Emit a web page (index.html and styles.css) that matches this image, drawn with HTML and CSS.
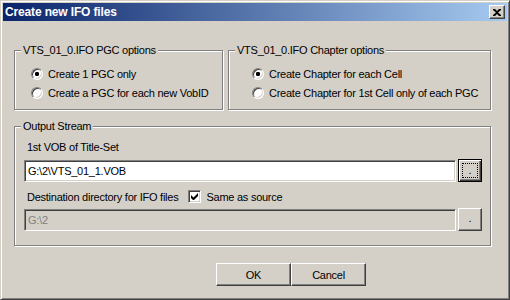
FILE: index.html
```html
<!DOCTYPE html>
<html lang="en">
<head>
  <meta charset="UTF-8">
  <title>Create new IFO files</title>
  <link rel="stylesheet" href="styles.css">
</head>
<body>
  <div class="window">
    <div class="titlebar">
      <span class="title">Create new IFO files</span>
      <button class="close">
        <svg width="8" height="7" viewBox="0 0 8 7"><path d="M0 0h2l2 2 2-2h2v1L5 3.5 8 6v1H6L4 5 2 7H0V6l3-2.5L0 1z" fill="#000"/></svg>
      </button>
    </div>

    <div class="content">
      <div class="row">
        <fieldset class="group pgc">
          <legend>VTS_01_0.IFO PGC options</legend>
          <div class="group-body">
            <label class="opt"><span class="radio checked"></span>Create 1 PGC only</label>
            <label class="opt"><span class="radio"></span>Create a PGC for each new VobID</label>
          </div>
        </fieldset>
        <fieldset class="group chapter">
          <legend>VTS_01_0.IFO Chapter options</legend>
          <div class="group-body">
            <label class="opt"><span class="radio checked"></span>Create Chapter for each Cell</label>
            <label class="opt"><span class="radio"></span>Create Chapter for 1st Cell only of each PGC</label>
          </div>
        </fieldset>
      </div>

      <!-- Output Stream -->
      <fieldset class="group output">
        <legend>Output Stream</legend>
        <div class="group-body">
          <div class="caption">1st VOB of Title-Set</div>
          <div class="field-row">
            <div class="edit">G:\2\VTS_01_1.VOB</div>
            <button class="btn browse default"><span class="focus">.</span></button>
          </div>
          <div class="dest">
            <span>Destination directory for IFO files</span>
            <span class="check">
              <svg width="7" height="7" viewBox="0 0 7 7"><path d="M0 2v3l2 2h1l4-4V0L2.5 4.5z" fill="#000"/></svg>
            </span>
            <span>Same as source</span>
          </div>
          <div class="field-row">
            <div class="edit disabled">G:\2</div>
            <button class="btn browse">.</button>
          </div>
        </div>
      </fieldset>

      <div class="actions">
        <button class="btn">OK</button>
        <button class="btn">Cancel</button>
      </div>
    </div>
  </div>
</body>
</html>
```

FILE: styles.css
```css
body { margin:0; background:#d4d0c8; font-family:"Liberation Sans", Arial, sans-serif; font-size:11px; letter-spacing:-0.25px; color:#000; }
.window { width:510px; height:300px; box-sizing:border-box; border:1px solid; border-color:#d4d0c8 #404040 #404040 #d4d0c8; box-shadow:inset 1px 1px #fff, inset -1px -1px #808080; padding:2px; background:#d4d0c8; }

/* title bar */
.titlebar { height:18px; display:flex; align-items:center; justify-content:space-between; background:linear-gradient(to right, #0a246a, #a6caf0); }
.title { color:#fff; font-weight:bold; font-size:12px; padding-left:2px; letter-spacing:-0.15px; }
.close { width:16px; height:14px; margin-right:2px; padding:0; display:flex; align-items:center; justify-content:center; background:#d4d0c8; border:1px solid; border-color:#fff #404040 #404040 #fff; box-shadow:inset -1px -1px #808080; }

.content { padding:23px 11px 0 11px; }
.row { display:flex; gap:5px; }

/* group boxes */
.group { margin:0; padding:0; border:1px solid #808080; box-shadow:inset 1px 1px #fff, 1px 1px #fff; box-sizing:border-box; }
.group legend { margin-left:6px; padding:0 2px; line-height:13px; background:#d4d0c8; }
.pgc { width:209px; }
.pgc .group-body { padding:7px 0 7px 16px; }
.chapter { width:263px; }
.chapter .group-body { padding:7px 0 7px 23px; }
.opt { display:flex; align-items:center; height:19px; white-space:nowrap; }
.radio { width:12px; height:12px; box-sizing:border-box; margin-right:5px; border-radius:50%; border:1px solid; border-color:#808080 #fff #fff #808080; box-shadow:inset 1px 1px #404040, inset -1px -1px #d4d0c8; background:#fff; }
.radio.checked { background:radial-gradient(circle, #000 0 2px, #fff 2.3px); }

.output { margin-top:10px; width:477px; }
.output .group-body { padding:0 8px 14px 9px; }
.caption { margin:8px 0 0 3px; line-height:13px; }
.field-row { display:flex; align-items:flex-end; gap:2px; height:23px; margin-top:5px; }
.edit { width:432px; height:22px; box-sizing:border-box; padding:3px 0 0 3px; line-height:14px; background:#fff; border:1px solid; border-color:#808080 #fff #fff #808080; box-shadow:inset 1px 1px #404040, inset -1px -1px #d4d0c8; }
.edit.disabled { background:#d4d0c8; color:#808080; }
.dest { display:flex; align-items:center; height:19px; margin:5px 0 0 3px; }
.dest + .field-row { margin-top:2px; }
.check { width:13px; height:13px; box-sizing:border-box; margin:0 5px 0 10px; display:flex; align-items:center; justify-content:center; background:#fff; border:1px solid; border-color:#808080 #fff #fff #808080; box-shadow:inset 1px 1px #404040, inset -1px -1px #d4d0c8; }

/* buttons */
.btn { width:75px; height:23px; padding:0; font:inherit; letter-spacing:inherit; color:#000; background:#d4d0c8; border:1px solid; border-color:#fff #404040 #404040 #fff; box-shadow:inset -1px -1px #808080; }
.browse { width:24px; line-height:13px; display:flex; align-items:flex-end; justify-content:center; padding-bottom:5px; }
.browse.default { border:1px solid #000; box-shadow:inset 1px 1px #fff, inset -1px -1px #404040, inset -2px -2px #808080; padding:3px; }
.browse .focus { flex:1; align-self:stretch; display:flex; align-items:flex-end; justify-content:center; border:1px dotted #000; line-height:13px; }
.actions { display:flex; padding-left:202px; margin-top:17px; }
```
